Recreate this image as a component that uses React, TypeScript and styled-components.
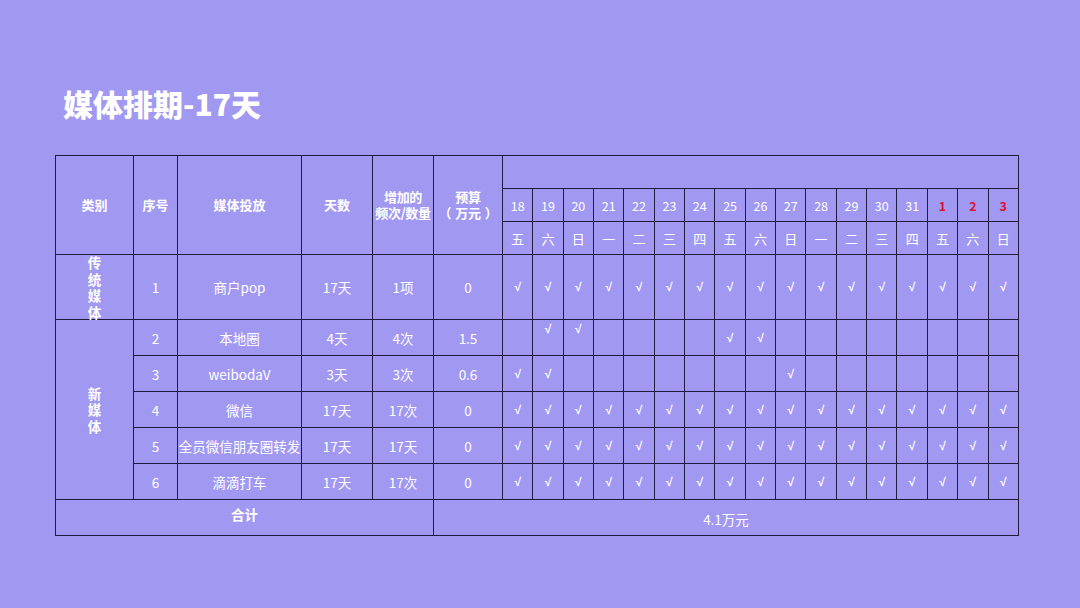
import React from 'react';
import styled, { createGlobalStyle } from 'styled-components';

const GlobalStyle = createGlobalStyle`
  html, body {
    margin: 0;
    padding: 0;
    background: #a198f2;
  }
  body {
    font-family: "Noto Sans CJK SC", "Noto Sans", sans-serif;
    color: #ffffff;
  }
`;

const dates = [18, 19, 20, 21, 22, 23, 24, 25, 26, 27, 28, 29, 30, 31, 1, 2, 3];
const weekdays = ['五', '六', '日', '一', '二', '三', '四', '五', '六', '日', '一', '二', '三', '四', '五', '六', '日'];
const all = dates.map((_, i) => i);

type Row = {
  no: number;
  name: string;
  days: string;
  freq: string;
  budget: string;
  checks: number[];
  topChecks?: number[];
  tall?: boolean;
};

const rows: Row[] = [
  { no: 1, name: '商户pop', days: '17天', freq: '1项', budget: '0', checks: all, tall: true },
  { no: 2, name: '本地圈', days: '4天', freq: '4次', budget: '1.5', checks: [7, 8], topChecks: [1, 2] },
  { no: 3, name: 'weibodaV', days: '3天', freq: '3次', budget: '0.6', checks: [0, 1, 9] },
  { no: 4, name: '微信', days: '17天', freq: '17次', budget: '0', checks: all },
  { no: 5, name: '全员微信朋友圈转发', days: '17天', freq: '17天', budget: '0', checks: all },
  { no: 6, name: '滴滴打车', days: '17天', freq: '17次', budget: '0', checks: all },
];

export default function App() {
  return (
    <Page>
      <GlobalStyle />
      <Title>媒体排期-17天</Title>
      <Table>
        <colgroup>
          <col style={{ width: 78 }} />
          <col style={{ width: 44 }} />
          <col style={{ width: 124 }} />
          <col style={{ width: 71 }} />
          <col style={{ width: 61 }} />
          <col style={{ width: 69 }} />
          {dates.map((d, i) => (
            <col key={i} />
          ))}
        </colgroup>
        <thead>
          <HeadRow>
            <HeadCell rowSpan={3}>类别</HeadCell>
            <HeadCell rowSpan={3}>序号</HeadCell>
            <HeadCell rowSpan={3}>媒体投放</HeadCell>
            <HeadCell rowSpan={3}>天数</HeadCell>
            <HeadCell rowSpan={3} $tight>
              增加的<br />频次/数量
            </HeadCell>
            <HeadCell rowSpan={3} $tight>
              预算<br />
              <Paren $side="left">（</Paren>万元<Paren $side="right">）</Paren>
            </HeadCell>
            <HeadCell colSpan={17} />
          </HeadRow>
          <HeadRow>
            {dates.map((d, i) => (
              <DateCell key={i} $red={i >= 14}>
                {d}
              </DateCell>
            ))}
          </HeadRow>
          <HeadRow>
            {weekdays.map((w, i) => (
              <DayCell key={i}>{w}</DayCell>
            ))}
          </HeadRow>
        </thead>
        <tbody>
          {rows.map((r, ri) => (
            <BodyRow key={r.no} $tall={r.tall}>
              {ri === 0 && (
                <CategoryCell>
                  <Stack>传<br />统<br />媒<br />体</Stack>
                </CategoryCell>
              )}
              {ri === 1 && (
                <CategoryCell rowSpan={5}>
                  <Stack>新<br />媒<br />体</Stack>
                </CategoryCell>
              )}
              <Cell>{r.no}</Cell>
              <Cell $nowrap>{r.name}</Cell>
              <Cell>{r.days}</Cell>
              <Cell>{r.freq}</Cell>
              <Cell>{r.budget}</Cell>
              {dates.map((_, i) => {
                const top = r.topChecks?.includes(i);
                return (
                  <CheckCell key={i} $top={top}>
                    {top || r.checks.includes(i) ? '√' : ''}
                  </CheckCell>
                );
              })}
            </BodyRow>
          ))}
          <BodyRow>
            <TotalLabel colSpan={5}>合计</TotalLabel>
            <TotalValue colSpan={18}>4.1万元</TotalValue>
          </BodyRow>
        </tbody>
      </Table>
    </Page>
  );
}

const Page = styled.div`
  width: 1080px;
  height: 608px;
  box-sizing: border-box;
  padding: 88px 0 0 55px;
  overflow: hidden;
`;

const Title = styled.h1`
  margin: 0 0 37px 0;
  padding-left: 8px;
  font-size: 30px;
  line-height: 30px;
  font-weight: 900;
  color: #ffffff;
`;

const Table = styled.table`
  width: 964px;
  table-layout: fixed;
  border-collapse: collapse;
  border: 1px solid #1f1b3e;

  td, th {
    border: 1px solid #1f1b3e;
    padding: 0;
    text-align: center;
    vertical-align: middle;
    color: #ffffff;
  }
`;

const HeadRow = styled.tr`
  height: 33px;
`;

const HeadCell = styled.th<{ $tight?: boolean }>`
  font-size: 13px;
  font-weight: 700;
  line-height: ${(p) => (p.$tight ? '16px' : '18px')};
  letter-spacing: ${(p) => (p.$tight ? '-0.3px' : '0')};
  white-space: nowrap;
`;

const Paren = styled.span<{ $side: 'left' | 'right' }>`
  margin-left: ${(p) => (p.$side === 'right' ? '4px' : '0')};
  margin-right: ${(p) => (p.$side === 'left' ? '4px' : '0')};
`;

const DateCell = styled.th<{ $red?: boolean }>`
  font-size: 12.5px;
  font-weight: ${(p) => (p.$red ? 700 : 400)};
  color: ${(p) => (p.$red ? '#e0102c' : '#ffffff')} !important;
`;

const DayCell = styled.th`
  font-size: 13px;
  font-weight: 400;
`;

const BodyRow = styled.tr<{ $tall?: boolean }>`
  height: ${(p) => (p.$tall ? '65px' : '36px')};
`;

const CategoryCell = styled.td`
  font-size: 13.5px;
  font-weight: 700;
`;

const Stack = styled.div`
  line-height: 16.5px;
  margin: -4px 0;
`;

const Cell = styled.td<{ $nowrap?: boolean }>`
  font-size: 13.5px;
  white-space: ${(p) => (p.$nowrap ? 'nowrap' : 'normal')};
  overflow: hidden;
`;

const CheckCell = styled.td<{ $top?: boolean }>`
  font-family: "Liberation Sans", "DejaVu Sans", sans-serif;
  font-size: 12px;
  font-weight: 700;
  vertical-align: ${(p) => (p.$top ? 'top' : 'middle')} !important;
  padding-top: ${(p) => (p.$top ? '2px' : '0')} !important;
`;

const TotalLabel = styled.td`
  font-size: 13.5px;
  font-weight: 700;
  padding-bottom: 8px !important;
`;

const TotalValue = styled.td`
  font-size: 13.5px;
  padding-top: 2px !important;
`;
